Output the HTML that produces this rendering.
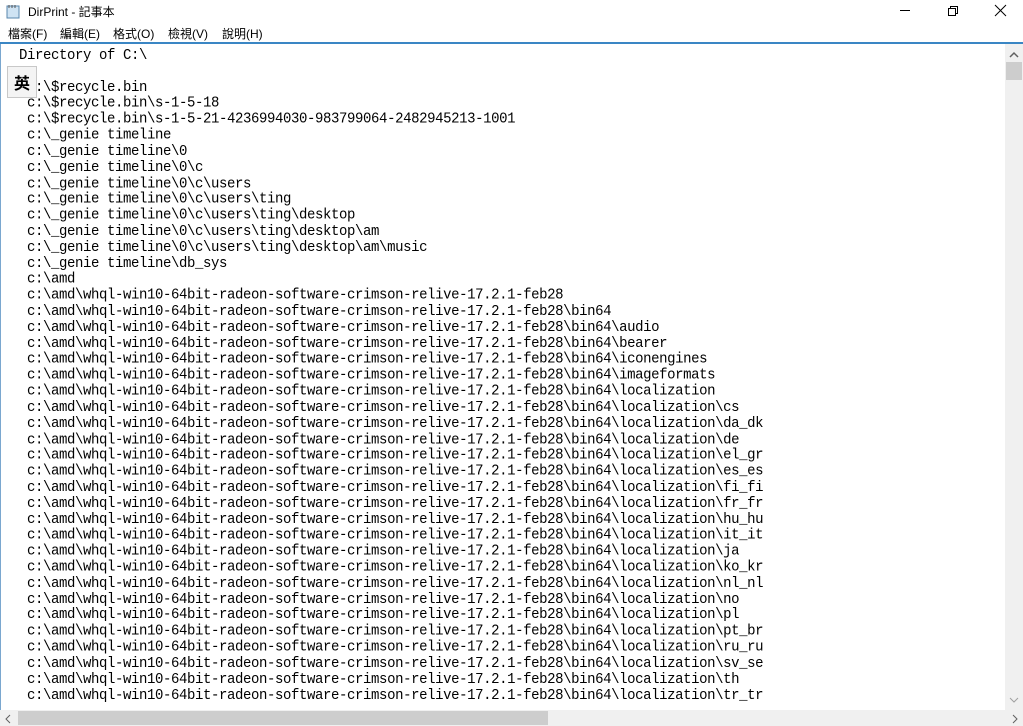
<!DOCTYPE html>
<html><head><meta charset="utf-8"><style>
*{margin:0;padding:0;box-sizing:border-box}
body{width:1023px;height:726px;overflow:hidden;background:#fff;position:relative;font-family:"Liberation Sans","Noto Sans CJK TC",sans-serif}
.title{position:absolute;left:0;top:0;width:1023px;height:22px;background:#fff}
.title .t{position:absolute;left:28px;top:3px;font-size:12px;color:#000}
.menu{position:absolute;left:0;top:22px;height:20px;width:1023px;font-size:12px;color:#000}
.menu span{position:absolute;top:3px}
.line{position:absolute;left:0;top:42px;width:1023px;height:2px;background:#3a86c4}
.edit{position:absolute;left:0;top:44px;width:1006px;height:666px;border-left:1px solid #7aa7cf;overflow:hidden}
pre{position:absolute;left:18px;top:4px;font-family:"Liberation Mono",monospace;font-size:14px;letter-spacing:-0.4px;line-height:14.815px;color:#000;transform:scaleY(1.08);transform-origin:0 0}
.vs{position:absolute;left:1005px;top:44px;width:18px;height:666px;background:#f0f0f0}
.hs{position:absolute;left:0;top:710px;width:1023px;height:16px;background:#f0f0f0}
.ime{position:absolute;left:7px;top:66px;width:30px;height:32px;border:1px solid #c8c8c8;background:#f4f4f4;font-size:16px;font-weight:bold;text-align:center;line-height:30px;font-family:"Noto Sans CJK TC",sans-serif}
</style></head><body>
<div class="title">
<svg style="position:absolute;left:6px;top:4px" width="16" height="15"><rect x="1" y="2" width="12" height="12" fill="#cfe3f3" stroke="#5a87ad"/><line x1="3" y1="1" x2="3" y2="4" stroke="#555"/><line x1="6" y1="1" x2="6" y2="4" stroke="#555"/><line x1="9" y1="1" x2="9" y2="4" stroke="#555"/></svg>
<div class="t">DirPrint - 記事本</div>
<svg style="position:absolute;left:900px;top:4px" width="120" height="14"><line x1="0" y1="6.5" x2="10" y2="6.5" stroke="#000"/><rect x="48.5" y="4.5" width="7" height="7" fill="none" stroke="#000"/><path d="M50.5 4.5V2.5H57.5V9.5H55.5" fill="none" stroke="#000"/><path d="M95 1L106 12M106 1L95 12" stroke="#000"/></svg>
</div>
<div class="menu"><span style="left:8px">檔案(F)</span><span style="left:60px">編輯(E)</span><span style="left:113px">格式(O)</span><span style="left:168px">檢視(V)</span><span style="left:222px">說明(H)</span></div>
<div class="line"></div>
<div class="edit"><pre>Directory of C:\

 c:\$recycle.bin
 c:\$recycle.bin\s-1-5-18
 c:\$recycle.bin\s-1-5-21-4236994030-983799064-2482945213-1001
 c:\_genie timeline
 c:\_genie timeline\0
 c:\_genie timeline\0\c
 c:\_genie timeline\0\c\users
 c:\_genie timeline\0\c\users\ting
 c:\_genie timeline\0\c\users\ting\desktop
 c:\_genie timeline\0\c\users\ting\desktop\am
 c:\_genie timeline\0\c\users\ting\desktop\am\music
 c:\_genie timeline\db_sys
 c:\amd
 c:\amd\whql-win10-64bit-radeon-software-crimson-relive-17.2.1-feb28
 c:\amd\whql-win10-64bit-radeon-software-crimson-relive-17.2.1-feb28\bin64
 c:\amd\whql-win10-64bit-radeon-software-crimson-relive-17.2.1-feb28\bin64\audio
 c:\amd\whql-win10-64bit-radeon-software-crimson-relive-17.2.1-feb28\bin64\bearer
 c:\amd\whql-win10-64bit-radeon-software-crimson-relive-17.2.1-feb28\bin64\iconengines
 c:\amd\whql-win10-64bit-radeon-software-crimson-relive-17.2.1-feb28\bin64\imageformats
 c:\amd\whql-win10-64bit-radeon-software-crimson-relive-17.2.1-feb28\bin64\localization
 c:\amd\whql-win10-64bit-radeon-software-crimson-relive-17.2.1-feb28\bin64\localization\cs
 c:\amd\whql-win10-64bit-radeon-software-crimson-relive-17.2.1-feb28\bin64\localization\da_dk
 c:\amd\whql-win10-64bit-radeon-software-crimson-relive-17.2.1-feb28\bin64\localization\de
 c:\amd\whql-win10-64bit-radeon-software-crimson-relive-17.2.1-feb28\bin64\localization\el_gr
 c:\amd\whql-win10-64bit-radeon-software-crimson-relive-17.2.1-feb28\bin64\localization\es_es
 c:\amd\whql-win10-64bit-radeon-software-crimson-relive-17.2.1-feb28\bin64\localization\fi_fi
 c:\amd\whql-win10-64bit-radeon-software-crimson-relive-17.2.1-feb28\bin64\localization\fr_fr
 c:\amd\whql-win10-64bit-radeon-software-crimson-relive-17.2.1-feb28\bin64\localization\hu_hu
 c:\amd\whql-win10-64bit-radeon-software-crimson-relive-17.2.1-feb28\bin64\localization\it_it
 c:\amd\whql-win10-64bit-radeon-software-crimson-relive-17.2.1-feb28\bin64\localization\ja
 c:\amd\whql-win10-64bit-radeon-software-crimson-relive-17.2.1-feb28\bin64\localization\ko_kr
 c:\amd\whql-win10-64bit-radeon-software-crimson-relive-17.2.1-feb28\bin64\localization\nl_nl
 c:\amd\whql-win10-64bit-radeon-software-crimson-relive-17.2.1-feb28\bin64\localization\no
 c:\amd\whql-win10-64bit-radeon-software-crimson-relive-17.2.1-feb28\bin64\localization\pl
 c:\amd\whql-win10-64bit-radeon-software-crimson-relive-17.2.1-feb28\bin64\localization\pt_br
 c:\amd\whql-win10-64bit-radeon-software-crimson-relive-17.2.1-feb28\bin64\localization\ru_ru
 c:\amd\whql-win10-64bit-radeon-software-crimson-relive-17.2.1-feb28\bin64\localization\sv_se
 c:\amd\whql-win10-64bit-radeon-software-crimson-relive-17.2.1-feb28\bin64\localization\th
 c:\amd\whql-win10-64bit-radeon-software-crimson-relive-17.2.1-feb28\bin64\localization\tr_tr</pre></div>
<div class="ime">英</div>
<div class="vs">
<svg style="position:absolute;left:4px;top:7px" width="10" height="8"><path d="M1 6L5 2L9 6" fill="none" stroke="#606060" stroke-width="1.5"/></svg>
<div style="position:absolute;left:1px;top:18px;width:16px;height:18px;background:#cdcdcd"></div>
<svg style="position:absolute;left:4px;top:652px" width="10" height="8"><path d="M1 2L5 6L9 2" fill="none" stroke="#a0a0a0"/></svg>
</div>
<div class="hs">
<svg style="position:absolute;left:4px;top:4px" width="8" height="10"><path d="M6 1L2 5L6 9" fill="none" stroke="#606060"/></svg>
<div style="position:absolute;left:18px;top:1px;width:530px;height:14px;background:#cdcdcd"></div>
<svg style="position:absolute;left:1011px;top:4px" width="8" height="10"><path d="M2 1L6 5L2 9" fill="none" stroke="#606060"/></svg>
</div>
</body></html>
